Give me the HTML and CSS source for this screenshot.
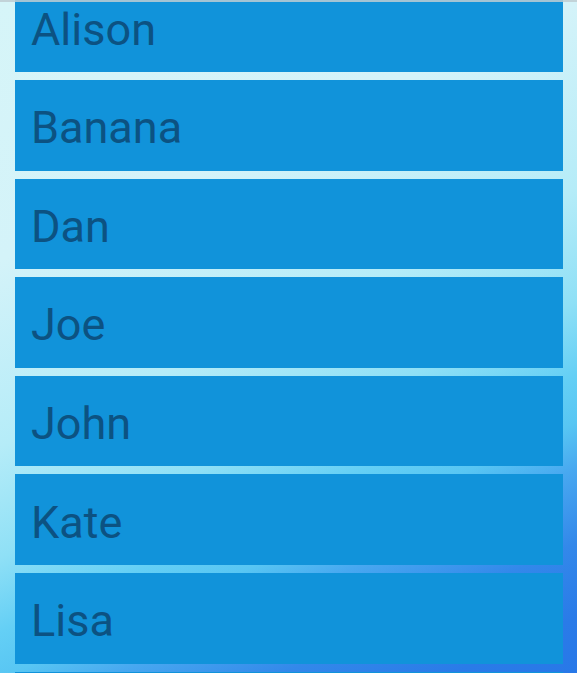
FILE: index.html
```html
<!DOCTYPE html>
<html lang="en">
<head>
<meta charset="utf-8">
<title>Names</title>
<link rel="stylesheet" href="styles.css">
</head>
<body>
<div class="screen">
  <div class="topshade"></div>
  <ul class="list">
    <li class="item">Alison</li>
    <li class="item">Banana</li>
    <li class="item">Dan</li>
    <li class="item">Joe</li>
    <li class="item">John</li>
    <li class="item">Kate</li>
    <li class="item">Lisa</li>
    <li class="item"></li>
  </ul>
</div>
</body>
</html>
```
FILE: styles.css
```css
html, body {
  margin: 0;
  padding: 0;
}

body {
  font-family: Roboto, "Noto Sans", sans-serif;
}

.screen {
  position: relative;
  width: 577px;
  height: 673px;
  overflow: hidden;
  background: linear-gradient(156deg,
    #d6f5f8 0%,
    #d4f3f9 28%,
    #b5ecf8 48%,
    #8fe0f6 60%,
    #64cff5 68%,
    #58c6f3 73%,
    #48a8f0 78%,
    #3388ea 86%,
    #2a7be8 94%,
    #2878e8 100%);
}

.topshade {
  position: absolute;
  top: 0;
  left: 0;
  right: 0;
  height: 2px;
  background: rgba(190, 205, 210, 0.85);
  z-index: 2;
}

.list {
  list-style: none;
  margin: -18.6px 0 0 0;
  padding: 0 14px 0 15px;
  display: flex;
  flex-direction: column;
  gap: 8px;
}

.item {
  height: 90.6px;
  flex-shrink: 0;
  box-sizing: border-box;
  background: #1193da;
  color: #0c5282;
  font-size: 45px;
  display: flex;
  align-items: center;
  padding: 5px 0 0 16px;
}
```
